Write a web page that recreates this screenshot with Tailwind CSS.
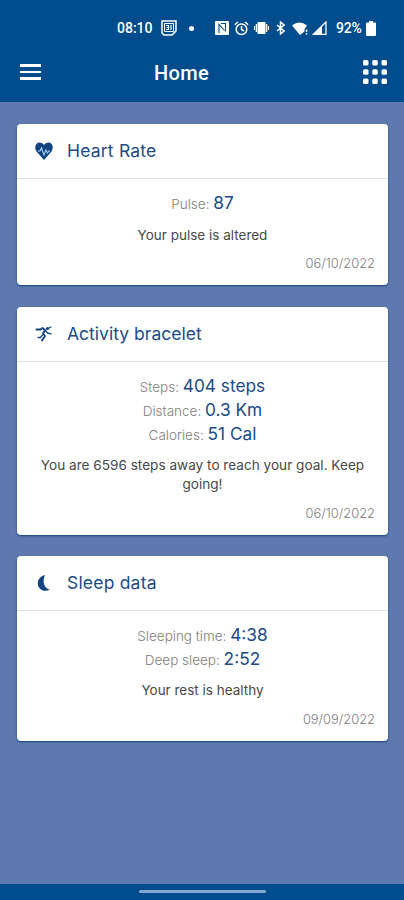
<!DOCTYPE html>
<html lang="en">

<head>
    <meta charset="UTF-8">
    <meta name="viewport" content="width=device-width, initial-scale=1.0">
    <title>Home</title>
    <script src="https://cdn.jsdelivr.net/npm/@tailwindcss/browser@4"></script>
</head>

<body class="bg-[#5e79ae] font-['Inter','Liberation_Sans',sans-serif] h-screen flex flex-col overflow-hidden">
    <!-- Top area: status bar and navigation -->
    <header class="bg-[#004c8c] h-[102px] shrink-0 text-white">
        <!-- Status bar -->
        <div class="h-14 pl-[117px] flex items-center font-['Roboto',sans-serif] text-[14px] font-medium">
            <span class="w-[36px] whitespace-nowrap">08:10</span>
            <!-- Calendar -->
            <svg class="ml-2 w-4 h-4" viewBox="0 0 16 16" fill="none" stroke="currentColor">
                <path d="M1 1h14v10l-4 4H3l-2-2z" stroke-width="1.5" />
                <path d="M3.500 3.500h9v8h-9z" stroke-width="1" />
                <path d="M5 5.500h2.500v2H5.500h2v2H5M10 5v5" stroke-width="1.200" />
            </svg>
            <span class="ml-[12px] w-[5px] h-[5px] rounded-full bg-white"></span>
            <!-- NFC -->
            <svg class="ml-[21px] w-[14px] h-[14px]" viewBox="0 0 14 14">
                <rect width="14" height="14" rx="1" fill="#fff" />
                <path d="M4 12V3.500l5.500 6M6 2.500h4.500v8" fill="none" stroke="#004c8c" stroke-width="1.1" />
            </svg>
            <!-- Alarm -->
            <svg class="ml-[5px] w-[15px] h-[15px]" viewBox="0 0 15 15" fill="none" stroke="currentColor" stroke-width="1.5">
                <circle cx="7.500" cy="8.300" r="5.300" />
                <path d="M7.500 5v3.500l2.500 1.500M.8 3.700L4 1M14.200 3.700L11 1" />
            </svg>
            <!-- Vibrate -->
            <svg class="ml-[5px] w-[15px] h-[14px]" viewBox="0 0 15 14" fill="currentColor">
                <rect x="3.500" y="1" width="8" height="12" rx="1" />
                <path d="M1.700 3h1.300v8H1.700zM12 3h1.300v8H12zM0 5h1v4H0zM14 5h1v4h-1z" />
            </svg>
            <!-- Bluetooth -->
            <svg class="ml-[7px] w-[9px] h-[14px]" viewBox="0 0 9 14" fill="none" stroke="currentColor" stroke-width="1.5">
                <path d="M1 4l7 6-3.500 3V1L8 4l-7 6" />
            </svg>
            <!-- Wifi -->
            <svg class="ml-[7px] w-[17px] h-[13px]" viewBox="0 0 17 13" fill="currentColor">
                <path d="M0 3.500Q7.500-2.500 15 3.500L12.500 7v2.500L8 13z" />
                <path d="M13.800 7.500h1.500V10h-1.500zM13.800 11h1.500v1.500h-1.500z" />
            </svg>
            <!-- Signal -->
            <svg class="ml-[3px] w-[15px] h-[14px]" viewBox="0 0 15 14">
                <path d="M1.500 13.300L14 1v12.300z" fill="none" stroke="#fff" stroke-width="1.3" />
                <path d="M1 13.500L10 5v8.500z" fill="#fff" />
            </svg>
            <span class="ml-[9px] w-[27px] whitespace-nowrap text-[14px] tracking-[-0.2px]">92%</span>
            <!-- Battery -->
            <svg class="ml-[3px] w-[10px] h-[15px]" viewBox="0 0 10 15" fill="currentColor">
                <path d="M3 0h4v1.500h2q1 0 1 1V14q0 1-1 1H1q-1 0-1-1V2.500q0-1 1-1h2z" />
            </svg>
        </div>
        <!-- Navigation -->
        <nav class="h-8 pl-5 pr-[17px] flex items-center">
            <button class="w-[21px] flex flex-col gap-1">
                <span class="h-[2.500px] bg-white"></span>
                <span class="h-[2.500px] bg-white"></span>
                <span class="h-[2.500px] bg-white"></span>
            </button>
            <h1 class="ml-[113px] mt-[2px] text-[20px] font-medium font-['Roboto',sans-serif] tracking-[0.35px]">Home</h1>
            <svg class="ml-auto w-6 h-6" viewBox="0 0 24 24" fill="currentColor">
                <rect x="0" y="0" width="5.500" height="5.500" rx="1.500" />
                <rect x="9.250" y="0" width="5.500" height="5.500" rx="1.500" />
                <rect x="18.500" y="0" width="5.500" height="5.500" rx="1.500" />
                <rect x="0" y="9.250" width="5.500" height="5.500" rx="1.500" />
                <rect x="9.250" y="9.250" width="5.500" height="5.500" rx="1.500" />
                <rect x="18.500" y="9.250" width="5.500" height="5.500" rx="1.500" />
                <rect x="0" y="18.500" width="5.500" height="5.500" rx="1.500" />
                <rect x="9.250" y="18.500" width="5.500" height="5.500" rx="1.500" />
                <rect x="18.500" y="18.500" width="5.500" height="5.500" rx="1.500" />
            </svg>
        </nav>
    </header>

    <main class="flex-1 pt-[22px] pl-[17px] pr-4 flex flex-col gap-[21.5px] text-center text-[#808080]">
        <!-- Heart rate -->
        <section class="bg-white rounded-[4px] shadow-[0_1px_2px_#17437f]">
            <div class="h-[55px] pl-[17px] flex items-center border-b border-[#dedede] text-[#204b88]">
                <svg class="w-5 h-[18px]" viewBox="0 0 20 18">
                    <path d="M10 18L2.500 9.500C0 6 1.500 .5 5.200.5 7.500.5 9 1.600 10 3c1-1.400 2.500-2.500 4.800-2.500C18.500.5 20 6 17.500 9.500z" fill="#124481" />
                    <path d="M4 9h2l1.500-3 2.500 7 2-5 1.500 3 1.500-2h1" fill="none" stroke="#a9d3f2" stroke-width="1.1" />
                </svg>
                <h2 class="ml-[13px] text-[17.5px] tracking-[0.2px]">Heart Rate</h2>
            </div>
            <div class="pt-3 pb-3 px-[13px]">
                <p class="h-6 leading-6 text-[13.5px] font-light">Pulse: <span class="text-[17.300px] font-normal text-[#204b88]">87</span></p>
                <p class="mt-[11px] leading-[19px] text-[13.5px] text-[#484848]">Your pulse is altered</p>
                <p class="mt-[10px] leading-[18px] text-right text-[12.900px] font-light">06/10/2022</p>
            </div>
        </section>

        <!-- Activity bracelet -->
        <section class="bg-white rounded-[4px] shadow-[0_1px_2px_#17437f]">
            <div class="h-[55px] pl-[17px] pt-px flex items-center border-b border-[#dedede] text-[#204b88]">
                <svg class="w-5 h-[18px]" viewBox="0 0 20 18" fill="none" stroke="#124481" stroke-linecap="round" stroke-linejoin="round">
                    <circle cx="13.500" cy="3.500" r="1.600" fill="#124481" stroke="none" />
                    <path d="M2.500 4.500h4l2-1.500 2.500 2L9 8.500l2 2.500-3 4.500" stroke-width="1.900" />
                    <path d="M11 5l2.500 3 3.500.8M15 3l2-1M8.500 10l-2 2.500H4" stroke-width="1.300" />
                </svg>
                <h2 class="ml-[13px] text-[17.5px] tracking-[0.020px]">Activity bracelet</h2>
            </div>
            <div class="pt-3 pb-3 px-[13px]">
                <p class="h-6 leading-6 text-[13.5px] font-light">Steps: <span class="text-[17.300px] font-normal text-[#204b88]">404 steps</span></p>
                <p class="h-6 leading-6 text-[13.5px] font-light">Distance: <span class="text-[17.300px] font-normal text-[#204b88]">0.3 Km</span></p>
                <p class="h-6 leading-6 text-[13.5px] font-light">Calories: <span class="text-[17.300px] font-normal text-[#204b88]">51 Cal</span></p>
                <p class="mt-[10px] leading-[19px] text-[13.600px] text-[#484848]">You are 6596 steps away to reach your goal. Keep<br>going!</p>
                <p class="mt-[11px] leading-[18px] text-right text-[12.900px] font-light">06/10/2022</p>
            </div>
        </section>

        <!-- Sleep data -->
        <section class="bg-white rounded-[4px] shadow-[0_1px_2px_#17437f]">
            <div class="h-[55px] pl-[17px] flex items-center border-b border-[#dedede] text-[#204b88]">
                <svg class="w-5 h-[18px]" viewBox="0 0 20 18">
                    <path d="M11 1C6.500 2 3.800 5.500 3.800 9.500c0 5 5.200 9.500 12.200 6.300C10 14 8 7 11 1z" fill="#124481" />
                </svg>
                <h2 class="ml-[13px] text-[17.5px] tracking-[0.2px]">Sleep data</h2>
            </div>
            <div class="pt-3 pb-3 px-[13px]">
                <p class="h-6 leading-6 text-[13.5px] font-light">Sleeping time: <span class="text-[17.300px] font-normal text-[#204b88]">4:38</span></p>
                <p class="h-6 leading-6 text-[13.5px] font-light">Deep sleep: <span class="text-[17.300px] font-normal text-[#204b88]">2:52</span></p>
                <p class="mt-[10px] leading-[19px] text-[13.5px] text-[#484848]">Your rest is healthy</p>
                <p class="mt-[11px] leading-[18px] text-right text-[12.900px] font-light">09/09/2022</p>
            </div>
        </section>
    </main>

    <!-- Gesture bar -->
    <footer class="bg-[#004c8c] h-4 shrink-0 flex justify-center pt-[6px]">
        <div class="w-[127px] h-[3px] rounded-full bg-[#84a8d2]"></div>
    </footer>
</body>

</html>
